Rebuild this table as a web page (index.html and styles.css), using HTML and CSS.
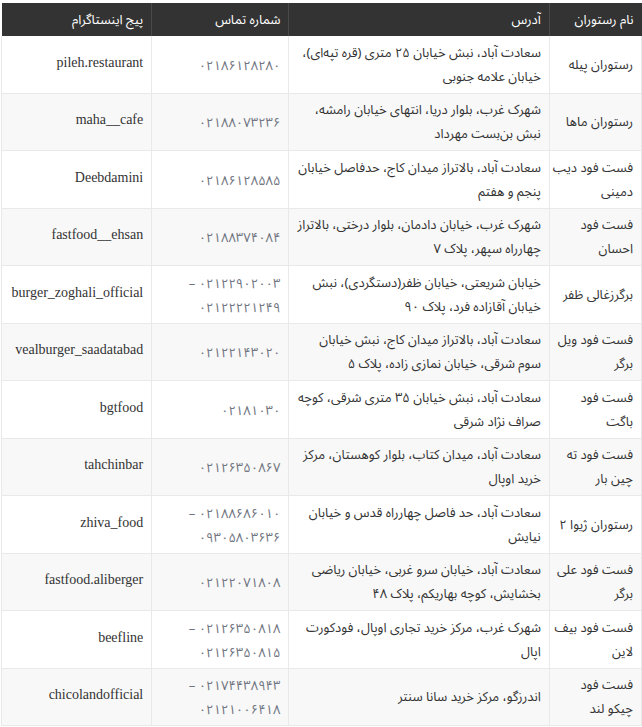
FILE: index.html
```html
<!DOCTYPE html>
<html lang="fa" dir="rtl">
<head>
<meta charset="utf-8">
<title>رستوران‌ها</title>
<link rel="stylesheet" href="styles.css">
</head>
<body>
<table class="list">
  <colgroup>
    <col class="c-name"><col class="c-addr"><col class="c-phone"><col class="c-insta">
  </colgroup>
  <thead>
    <tr><th>نام رستوران</th><th>آدرس</th><th>شماره تماس</th><th>پیج اینستاگرام</th></tr>
  </thead>
  <tbody>
    <tr><td>رستوران پیله</td><td>سعادت آباد، نبش خیابان ۲۵ متری (قره تپه‌ای)،<br>خیابان علامه جنوبی</td><td class="ph">۰۲۱۸۶۱۲۸۲۸۰</td><td class="ig" lang="en">pileh.restaurant</td></tr>
    <tr><td>رستوران ماها</td><td>شهرک غرب، بلوار دریا، انتهای خیابان رامشه،<br>نبش بن‌بست مهرداد</td><td class="ph">۰۲۱۸۸۰۷۳۲۳۶</td><td class="ig" lang="en">maha__cafe</td></tr>
    <tr><td>فست فود دیب<br>دمینی</td><td>سعادت آباد، بالاتراز میدان کاج، حدفاصل خیابان<br>پنجم و هفتم</td><td class="ph">۰۲۱۸۶۱۲۸۵۸۵</td><td class="ig" lang="en">Deebdamini</td></tr>
    <tr><td>فست فود<br>احسان</td><td>شهرک غرب، خیابان دادمان، بلوار درختی، بالاتراز<br>چهارراه سپهر، پلاک ۷</td><td class="ph">۰۲۱۸۸۳۷۴۰۸۴</td><td class="ig" lang="en">fastfood__ehsan</td></tr>
    <tr><td>برگرزغالی ظفر</td><td>خیابان شریعتی، خیابان ظفر(دستگردی)، نبش<br>خیابان آقازاده فرد، پلاک ۹۰</td><td class="ph">۰۲۱۲۲۹۰۲۰۰۳ –<br>۰۲۱۲۲۲۲۱۲۴۹</td><td class="ig" lang="en">burger_zoghali_official</td></tr>
    <tr><td>فست فود ویل<br>برگر</td><td>سعادت آباد، بالاتراز میدان کاج، نبش خیابان<br>سوم شرقی، خیابان نمازی زاده، پلاک ۵</td><td class="ph">۰۲۱۲۲۱۴۳۰۲۰</td><td class="ig" lang="en">vealburger_saadatabad</td></tr>
    <tr><td>فست فود<br>باگت</td><td>سعادت آباد، نبش خیابان ۳۵ متری شرقی، کوچه<br>صراف نژاد شرقی</td><td class="ph">۰۲۱۸۱۰۳۰</td><td class="ig" lang="en">bgtfood</td></tr>
    <tr><td>فست فود ته<br>چین بار</td><td>سعادت آباد، میدان کتاب، بلوار کوهستان، مرکز<br>خرید اوپال</td><td class="ph">۰۲۱۲۶۳۵۰۸۶۷</td><td class="ig" lang="en">tahchinbar</td></tr>
    <tr><td>رستوران ژیوا ۲</td><td>سعادت آباد، حد فاصل چهارراه قدس و خیابان<br>نیایش</td><td class="ph">۰۲۱۸۸۶۸۶۰۱۰ –<br>۰۹۳۰۵۸۰۳۶۳۶</td><td class="ig" lang="en">zhiva_food</td></tr>
    <tr><td>فست فود علی<br>برگر</td><td>سعادت آباد، خیابان سرو غربی، خیابان ریاضی<br>بخشایش، کوچه بهاریکم، پلاک ۴۸</td><td class="ph">۰۲۱۲۲۰۷۱۸۰۸</td><td class="ig" lang="en">fastfood.aliberger</td></tr>
    <tr><td>فست فود بیف<br>لاین</td><td>شهرک غرب، مرکز خرید تجاری اوپال، فودکورت<br>اپال</td><td class="ph">۰۲۱۲۶۳۵۰۸۱۸ –<br>۰۲۱۲۶۳۵۰۸۱۵</td><td class="ig" lang="en">beefline</td></tr>
    <tr><td>فست فود<br>چیکو لند</td><td>اندرزگو، مرکز خرید سانا سنتر</td><td class="ph">۰۲۱۷۴۴۳۸۹۴۳ –<br>۰۲۱۲۱۰۰۶۴۱۸</td><td class="ig" lang="en">chicolandofficial</td></tr>
  </tbody>
</table>
</body>
</html>
```

FILE: styles.css
```css
html, body {
  margin: 0;
  padding: 0;
  background: #ffffff;
}
body {
  padding: 3px 0 0 2px;
  font-family: "Noto Sans Arabic", "Vazirmatn", "DejaVu Sans", sans-serif;
  color: #333333;
}
.list {
  width: 641px;
  border-collapse: collapse;
  table-layout: fixed;
  font-size: 13px;
}
.c-name { width: 92px; }
.c-addr { width: 260px; }
.c-phone { width: 137px; }
.c-insta { width: 150px; }
.list th {
  background: #333333;
  color: #ffffff;
  font-weight: normal;
  text-align: right;
  height: 33px;
  padding: 0 8px;
  border-left: 1px solid #4a4a4a;
  box-sizing: border-box;
}
.list th:last-child { border-left: none; }
.list td {
  text-align: right;
  vertical-align: middle;
  line-height: 24px;
  padding: 4.5px 8px 4px 8px;
  border: 1px solid #e9e9e9;
  border-top: none;
  white-space: nowrap;
  overflow: hidden;
}
.list tbody tr:nth-child(even) td { background: #f8f8f8; }
.list td.ph {
  color: #6f7480;
  font-size: 13px;
  letter-spacing: 0.5px;
  padding-top: 5.5px;
  padding-bottom: 3px;
}
.list td.ig {
  font-family: "Liberation Serif", "Times New Roman", "DejaVu Serif", serif;
  font-size: 14px;
  color: #333333;
  padding-top: 2.5px;
  padding-bottom: 6px;
}
```
